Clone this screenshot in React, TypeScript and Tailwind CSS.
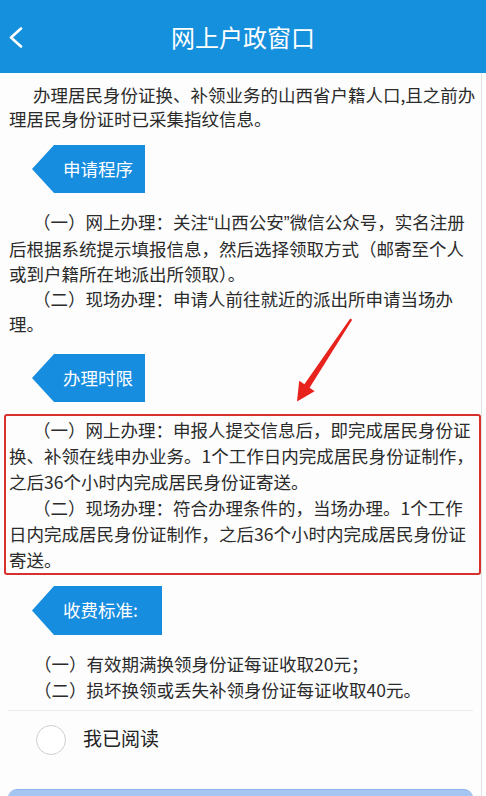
export default function App() {
  const font = { fontFamily: '"Noto Sans CJK SC", "Noto Sans", sans-serif' };

  return (
    <div className="relative h-[796px] w-[486px] overflow-hidden bg-white text-[#2b2b2b]" style={font}>
      {/* Header */}
      <div className="relative flex h-[73px] items-center justify-center bg-[#1590dc]">
        <svg className="absolute left-[8px] top-[27px]" width="16" height="21" viewBox="0 0 16 21" fill="none">
          <polyline points="13,1.5 3,10.5 13,19.5" stroke="white" strokeWidth="2.6" strokeLinecap="round" strokeLinejoin="round" />
        </svg>
        <span className="text-[24px] font-normal leading-none text-white">网上户政窗口</span>
      </div>

      <div className="w-[482px] border-r border-[#e2e2e2] bg-[#fdfdfd] pb-[20px]">
        {/* Intro */}
        <p className="whitespace-nowrap pl-[9px] pt-[10px] indent-[24px] text-[17.5px] leading-[24px]">
          办理居民身份证换、补领业务的山西省户籍人口,且之前办
          <br />
          理居民身份证时已采集指纹信息。
        </p>

        <Tag label="申请程序" className="mt-[14px] w-[113px]" />

        <p className="mt-[16px] whitespace-nowrap pl-[9px] text-[17.5px] leading-[25px]">
          <span className="block indent-[24px]">
            （一）网上办理：关注<span className="font-['Liberation_Sans']">“</span>山西公安
            <span className="font-['Liberation_Sans']">”</span>微信公众号，实名注册
          </span>
          <span className="block">后根据系统提示填报信息，然后选择领取方式（邮寄至个人</span>
          <span className="block">或到户籍所在地派出所领取）。</span>
          <span className="block indent-[24px]">（二）现场办理：申请人前往就近的派出所申请当场办</span>
          <span className="block">理。</span>
        </p>

        <Tag label="办理时限" className="mt-[18px] w-[113px]" />

        {/* Highlighted box */}
        <div className="ml-[4px] mt-[12px] w-[477px] rounded-[3px] border-2 border-[#d8302c] pl-[3px] pt-[1px]">
          <p className="whitespace-nowrap text-[17.5px] leading-[26px]">
            <span className="block indent-[24px]">（一）网上办理：申报人提交信息后，即完成居民身份证</span>
            <span className="block">换、补领在线申办业务。1个工作日内完成居民身份证制作，</span>
            <span className="block">之后36个小时内完成居民身份证寄送。</span>
            <span className="block indent-[24px]">（二）现场办理：符合办理条件的，当场办理。1个工作</span>
            <span className="block">日内完成居民身份证制作，之后36个小时内完成居民身份证</span>
            <span className="block">寄送。</span>
          </p>
        </div>

        <Tag label="收费标准:" className="mt-[11px] h-[49px] w-[130px]" />

        <p className="mt-[16px] whitespace-nowrap pl-[34px] text-[17.5px] leading-[26px]">
          （一）有效期满换领身份证每证收取20元；
          <br />
          （二）损坏换领或丢失补领身份证每证收取40元。
        </p>

        <div className="mx-[8px] mt-[7px] h-px bg-[#ececec]" />

        <div className="flex h-[58px] items-center">
          <div className="ml-[36px] h-[30px] w-[30px] rounded-full border-[1.5px] border-[#cfcfcf] bg-white" />
          <span className="-mt-[5px] ml-[17px] text-[19px] leading-none text-[#222]">我已阅读</span>
        </div>

        <div className="mx-[8px] mt-[20px] h-[50px] rounded-[9px] border-t border-[#8fb3ea] bg-[#a6c6f2]" />
      </div>

      {/* Red annotation arrow */}
      <svg className="absolute left-0 top-0" width="486" height="796" viewBox="0 0 486 796">
        <polygon
          points="350.2,318.4 352.2,319.8 309.6,387.8 314.6,391.2 297,401.5 299.2,380.8 304.4,384.3"
          fill="#e8221d"
        />
      </svg>
    </div>
  );
}

function Tag({ label, className = "" }: { label: string; className?: string }) {
  return (
    <div
      className={`ml-[32px] flex h-[48px] items-center bg-[#178de0] pl-[31px] text-[17.5px] text-white [clip-path:polygon(22px_0,100%_0,100%_100%,22px_100%,0_50%)] ${className}`}
    >
      {label}
    </div>
  );
}
